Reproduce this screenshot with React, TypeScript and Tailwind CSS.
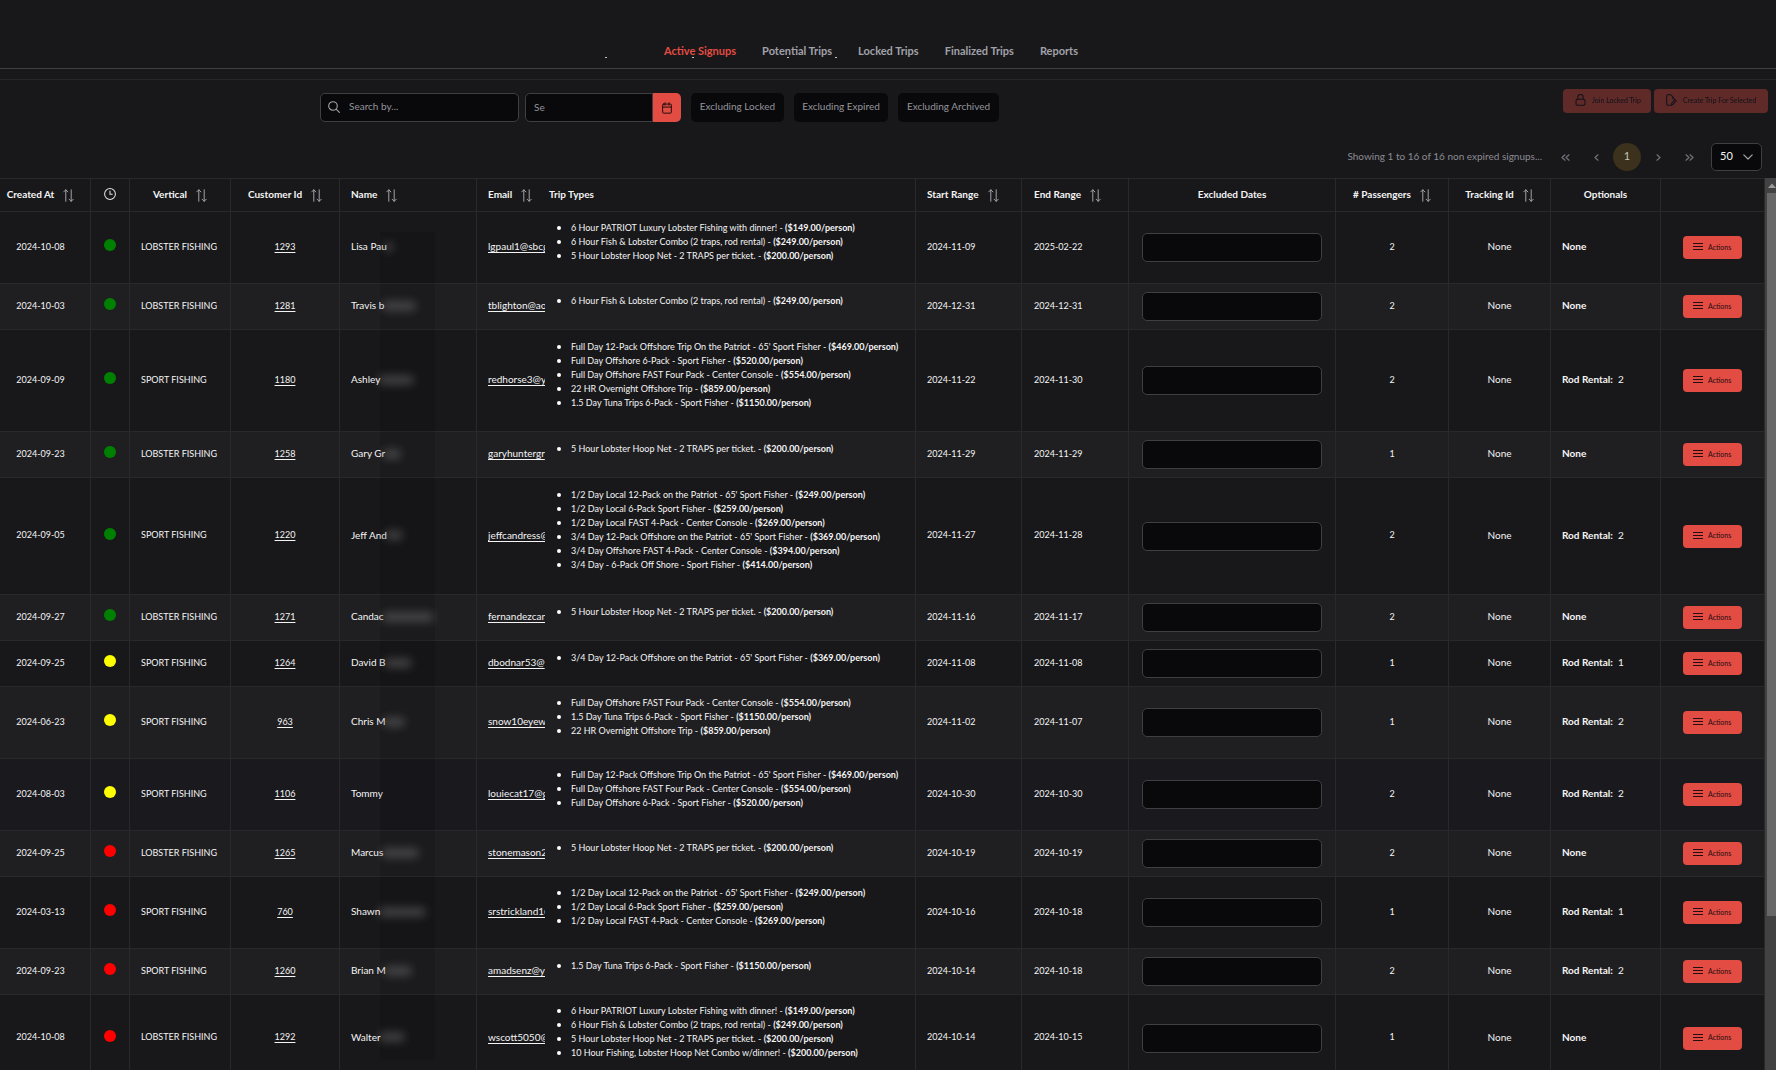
import type { ReactNode } from "react";

type Trip = [name: string, price: string];

type Signup = {
  created: string;
  status: "green" | "yellow" | "red";
  vertical: string;
  id: string;
  name: string;
  redacted: number;
  email: string;
  trips: Trip[];
  start: string;
  end: string;
  passengers: number;
  rods?: number;
  active?: boolean;
};

const LOBSTER = "LOBSTER FISHING";
const SPORT = "SPORT FISHING";

const luxury: Trip = ["6 Hour PATRIOT Luxury Lobster Fishing with dinner!", "149.00"];
const combo: Trip = ["6 Hour Fish & Lobster Combo (2 traps, rod rental)", "249.00"];
const hoopNet: Trip = ["5 Hour Lobster Hoop Net - 2 TRAPS per ticket.", "200.00"];
const tenHour: Trip = ["10 Hour Fishing, Lobster Hoop Net Combo w/dinner!", "200.00"];
const full12: Trip = ["Full Day 12-Pack Offshore Trip On the Patriot - 65' Sport Fisher", "469.00"];
const full6: Trip = ["Full Day Offshore 6-Pack - Sport Fisher", "520.00"];
const fullFast: Trip = ["Full Day Offshore FAST Four Pack - Center Console", "554.00"];
const overnight: Trip = ["22 HR Overnight Offshore Trip", "859.00"];
const tuna: Trip = ["1.5 Day Tuna Trips 6-Pack - Sport Fisher", "1150.00"];
const half12: Trip = ["1/2 Day Local 12-Pack on the Patriot - 65' Sport Fisher", "249.00"];
const half6: Trip = ["1/2 Day Local 6-Pack Sport Fisher", "259.00"];
const halfFast: Trip = ["1/2 Day Local FAST 4-Pack - Center Console", "269.00"];
const three12: Trip = ["3/4 Day 12-Pack Offshore on the Patriot - 65' Sport Fisher", "369.00"];
const threeFast: Trip = ["3/4 Day Offshore FAST 4-Pack - Center Console", "394.00"];
const three6: Trip = ["3/4 Day - 6-Pack Off Shore - Sport Fisher", "414.00"];

const signups: Signup[] = [
  { created: "2024-10-08", status: "green", vertical: LOBSTER, id: "1293", name: "Lisa Pau", redacted: 8, email: "lgpaul1@sbcg", trips: [luxury, combo, hoopNet], start: "2024-11-09", end: "2025-02-22", passengers: 2 },
  { created: "2024-10-03", status: "green", vertical: LOBSTER, id: "1281", name: "Travis b", redacted: 34, email: "tblighton@aol", trips: [combo], start: "2024-12-31", end: "2024-12-31", passengers: 2 },
  { created: "2024-09-09", status: "green", vertical: SPORT, id: "1180", name: "Ashley", redacted: 36, email: "redhorse3@ya", trips: [full12, full6, fullFast, overnight, tuna], start: "2024-11-22", end: "2024-11-30", passengers: 2, rods: 2 },
  { created: "2024-09-23", status: "green", vertical: LOBSTER, id: "1258", name: "Gary Gr", redacted: 18, email: "garyhuntergr", trips: [hoopNet], start: "2024-11-29", end: "2024-11-29", passengers: 1 },
  { created: "2024-09-05", status: "green", vertical: SPORT, id: "1220", name: "Jeff And", redacted: 18, email: "jeffcandress@", trips: [half12, half6, halfFast, three12, threeFast, three6], start: "2024-11-27", end: "2024-11-28", passengers: 2, rods: 2 },
  { created: "2024-09-27", status: "green", vertical: LOBSTER, id: "1271", name: "Candac", redacted: 52, email: "fernandezcan", trips: [hoopNet], start: "2024-11-16", end: "2024-11-17", passengers: 2 },
  { created: "2024-09-25", status: "yellow", vertical: SPORT, id: "1264", name: "David B", redacted: 28, email: "dbodnar53@", trips: [three12], start: "2024-11-08", end: "2024-11-08", passengers: 1, rods: 1 },
  { created: "2024-06-23", status: "yellow", vertical: SPORT, id: "963", name: "Chris M", redacted: 22, email: "snow10eyew@", trips: [fullFast, tuna, overnight], start: "2024-11-02", end: "2024-11-07", passengers: 1, rods: 2 },
  { created: "2024-08-03", status: "yellow", vertical: SPORT, id: "1106", name: "Tommy", redacted: 0, email: "louiecat17@g", trips: [full12, fullFast, full6], start: "2024-10-30", end: "2024-10-30", passengers: 2, rods: 2, active: true },
  { created: "2024-09-25", status: "red", vertical: LOBSTER, id: "1265", name: "Marcus", redacted: 38, email: "stonemason2", trips: [hoopNet], start: "2024-10-19", end: "2024-10-19", passengers: 2 },
  { created: "2024-03-13", status: "red", vertical: SPORT, id: "760", name: "Shawn", redacted: 48, email: "srstrickland1@", trips: [half12, half6, halfFast], start: "2024-10-16", end: "2024-10-18", passengers: 1, rods: 1 },
  { created: "2024-09-23", status: "red", vertical: SPORT, id: "1260", name: "Brian M", redacted: 28, email: "amadsenz@y", trips: [tuna], start: "2024-10-14", end: "2024-10-18", passengers: 2, rods: 2 },
  { created: "2024-10-08", status: "red", vertical: LOBSTER, id: "1292", name: "Walter", redacted: 26, email: "wscott5050@", trips: [luxury, combo, hoopNet, tenHour], start: "2024-10-14", end: "2024-10-15", passengers: 1 },
];

const rowHeights: Record<number, string> = {
  1: "h-[46px]",
  3: "h-[72px]",
  4: "h-[87px]",
  5: "h-[102px]",
  6: "h-[117px]",
};

const statusColors = {
  green: "bg-[#008000]",
  yellow: "bg-[#ffff00]",
  red: "bg-[#ff0000]",
};

const tabs = ["Active Signups", "Potential Trips", "Locked Trips", "Finalized Trips", "Reports"];

function SortIcon() {
  return (
    <svg viewBox="0 0 11 13" className="h-[13px] w-[11px] shrink-0 text-[#a1a1aa]" fill="none" stroke="currentColor" strokeWidth="1" strokeLinecap="round" strokeLinejoin="round">
      <path d="M2.8 12.3V.8M.7 2.9 2.8.8l2.1 2.1" />
      <path d="M8.2.8v11.5M6.1 10.2l2.1 2.1 2.1-2.1" />
    </svg>
  );
}

function ClockIcon() {
  return (
    <svg viewBox="0 0 14 14" className="inline h-[12px] w-[12px]" fill="none" stroke="#e4e4e7" strokeWidth="1.2" strokeLinecap="round">
      <circle cx="7" cy="7" r="6.3" />
      <path d="M7 3.6V7.2H9.6" />
    </svg>
  );
}

function SearchIcon() {
  return (
    <svg viewBox="0 0 14 14" className="h-[12px] w-[12px] shrink-0" fill="none" stroke="#a1a1aa" strokeWidth="1.3" strokeLinecap="round">
      <circle cx="5.8" cy="5.8" r="5" />
      <path d="M9.5 9.5 13.3 13.3" />
    </svg>
  );
}

function CalendarIcon() {
  return (
    <svg viewBox="0 0 12 14" className="h-[12px] w-[10px]" fill="none" stroke="#240d10" strokeWidth="1.2" strokeLinecap="round" strokeLinejoin="round">
      <rect x=".8" y="2.3" width="10.4" height="10.9" rx="1" />
      <path d="M.8 5.9h10.4M3.6.7v3M8.4.7v3" />
    </svg>
  );
}

function LockIcon() {
  return (
    <svg viewBox="0 0 12 14" className="h-[12px] w-[11px]" fill="none" stroke="currentColor" strokeWidth="1.2" strokeLinejoin="round">
      <rect x=".8" y="6.2" width="10.4" height="7" rx="1.4" />
      <path d="M2.9 6.2V3.8a3.1 3.1 0 0 1 6.2 0v2.4" />
    </svg>
  );
}

function FileEditIcon() {
  return (
    <svg viewBox="0 0 13 14" className="h-[12px] w-[11px]" fill="none" stroke="currentColor" strokeWidth="1.2" strokeLinejoin="round" strokeLinecap="round">
      <path d="M5 13.2H2.2A1.4 1.4 0 0 1 .8 11.8V2.2A1.4 1.4 0 0 1 2.2.8h3.4l2.6 2.6v2.2" />
      <path d="M8.2 4.2 12.2 8.2 8.4 12l-2.2 1.2.6-2.6 3.6-3.8" />
    </svg>
  );
}

function BarsIcon() {
  return (
    <svg viewBox="0 0 10 7" className="mb-px h-[7px] w-[10px]" fill="none" stroke="#240d10" strokeWidth="1">
      <path d="M0 .5h10M0 3.5h10M0 6.5h10" />
    </svg>
  );
}

function PagerButton({ label, d, w }: { label: string; d: string; w: string }) {
  return (
    <button type="button" aria-label={label} className="flex h-7 w-7 items-center justify-center rounded-full">
      <svg viewBox={`0 0 ${w} 7`} width={w} height="7" fill="none" stroke="#71717a" strokeWidth="1.2" strokeLinecap="round" strokeLinejoin="round">
        <path d={d} />
      </svg>
    </button>
  );
}

function Head({ children, sort, className = "justify-center" }: { children?: ReactNode; sort?: boolean; className?: string }) {
  return (
    <div className={`flex items-center gap-[9px] whitespace-nowrap ${className}`}>
      <span className="pb-[2px]">{children}</span>
      {sort && <SortIcon />}
    </div>
  );
}

const th = "h-[34px] border-y border-r border-[#29292c] p-0 text-[10px] font-bold";
const tdBase = "border-b border-r border-[#29292c]";
const td = `${tdBase} pb-[2px]`;

function Row({ row, striped }: { row: Signup; striped: boolean }) {
  const bg = row.active ? "bg-[#19191e]" : striped ? "bg-[#1f1f21]" : "bg-[#18181a]";
  return (
    <tr className={`${bg} ${rowHeights[row.trips.length]}`}>
      <td className={`${td} pr-[9px] text-center`}>{row.created}</td>
      <td className={`${tdBase} pb-[6px] text-center`}>
        <span className={`inline-block h-[12px] w-[12px] rounded-full align-middle ${statusColors[row.status]}`} />
      </td>
      <td className={`${td} pl-[11px]`}>{row.vertical}</td>
      <td className={`${td} text-center`}>
        <a href={`#customer-${row.id}`} className="underline underline-offset-2">{row.id}</a>
      </td>
      <td className={`${td} pl-[11px] text-[10px]`}>
        <div className="flex items-center">
          {row.name}
          <span className="-ml-[2px] h-[10px] rounded-full bg-white/20 blur-[4px]" style={{ width: row.redacted }} />
        </div>
      </td>
      <td className="overflow-hidden border-b border-[#29292c] pb-[2px] pl-[11px] text-[10px]">
        <a href="#email" className="block overflow-hidden whitespace-nowrap underline underline-offset-2">{row.email}</a>
      </td>
      <td className={`${tdBase} pb-[12px] pl-[12px]`}>
        <ul>
          {row.trips.map(([name, price]) => (
            <li key={name} className="flex items-center gap-[10px] whitespace-nowrap leading-[14px]">
              <span className="h-1 w-1 rounded-full bg-white" />
              <span>
                {name} - <b>(${price}/person)</b>
              </span>
            </li>
          ))}
        </ul>
      </td>
      <td className={`${td} pl-[11px]`}>{row.start}</td>
      <td className={`${td} pl-[12px]`}>{row.end}</td>
      <td className={`${tdBase} px-[13px]`}>
        <input aria-label={`Excluded dates for ${row.id}`} className="block h-[29px] w-full rounded-[5px] border border-[#3f3f43] bg-[#09090b] px-2" />
      </td>
      <td className={`${td} text-center`}>{row.passengers}</td>
      <td className={`${td} text-center text-[10px]`}>None</td>
      <td className={`${td} pl-[11px] text-[10px]`}>
        {row.rods ? (
          <>
            <b>Rod Rental:</b>&nbsp; {row.rods}
          </>
        ) : (
          <b>None</b>
        )}
      </td>
      <td className={tdBase}>
        <button type="button" className="mx-auto flex h-[23px] w-[59px] items-center gap-[5px] rounded bg-[#e24c43] pb-px pl-[10px] text-[7px] text-[#240d10]">
          <BarsIcon />
          Actions
        </button>
      </td>
    </tr>
  );
}

export default function App() {
  return (
    <main className="flex h-screen flex-col overflow-hidden bg-[#18181a] font-['Lato',sans-serif] text-[#f4f4f5]">
      <nav className="relative flex h-[69px] shrink-0 justify-center gap-[26px] border-b border-[#3f3f43] pr-[34px] pt-[43px] text-[11px] leading-4 font-bold text-[#a1a1aa]">
        {tabs.map((tab, i) => (
          <a key={tab} href="#tab" className={i === 0 ? "text-[#e24c43]" : undefined}>
            {tab}
          </a>
        ))}
        {/* ticks left under the tab strip */}
        <span className="absolute left-[605px] top-[57px] h-px w-[2px] bg-[#c4c4c8]" />
        <span className="absolute left-[692px] top-[57px] h-px w-[2px] bg-[#c4c4c8]" />
        <span className="absolute left-[787px] top-[57px] h-px w-[2px] bg-[#c4c4c8]" />
        <span className="absolute left-[835px] top-[57px] h-px w-[2px] bg-[#c4c4c8]" />
      </nav>

      <section className="mt-[10px] flex shrink-0 items-start border-t border-[#27272a] pl-80 pr-2 text-[10px]">
        <div className="flex pt-[13px]">
          <label className="flex h-[29px] w-[199px] items-center gap-[9px] rounded-[5px] border border-[#3f3f43] bg-[#09090b] pb-[2px] pl-[7px]">
            <SearchIcon />
            <input type="text" aria-label="Search" placeholder="Search by..." className="w-full bg-transparent outline-none placeholder:text-[#94949c]" />
          </label>
          <div className="ml-[6px] flex">
            <input type="text" aria-label="Date range" placeholder="Se" className="h-[29px] w-[128px] rounded-l-[5px] border border-[#3f3f43] bg-[#09090b] pb-[2px] pl-2 outline-none placeholder:text-[#94949c]" />
            <button type="button" aria-label="Choose date" className="flex h-[29px] w-[28px] items-center justify-center rounded-r-[5px] bg-[#e24c43]">
              <CalendarIcon />
            </button>
          </div>
          <div className="ml-[10px] flex gap-[10px] text-[#94949c]">
            <button type="button" className="h-[29px] w-[93px] rounded-[5px] bg-[#09090b] pb-[2px]">Excluding Locked</button>
            <button type="button" className="h-[29px] w-[94px] rounded-[5px] bg-[#09090b] pb-[2px]">Excluding Expired</button>
            <button type="button" className="h-[29px] w-[101px] rounded-[5px] bg-[#09090b] pb-[2px]">Excluding Archived</button>
          </div>
        </div>
        <div className="ml-auto flex gap-[3px] pt-[9px] text-[7px] text-[#020617]">
          <button type="button" disabled className="flex h-6 w-[88px] items-center gap-[6px] rounded bg-[#e24c43] pb-[2px] pl-3 opacity-35">
            <LockIcon />
            Join Locked Trip
          </button>
          <button type="button" disabled className="flex h-6 w-[114px] items-center gap-[6px] rounded bg-[#e24c43] pb-[2px] pl-3 opacity-35">
            <FileEditIcon />
            Create Trip For Selected
          </button>
        </div>
      </section>

      <section className="mt-[21px] mb-[7px] flex shrink-0 items-center justify-end gap-[3px] pr-[14px]">
        <p className="mr-[6px] pb-[2px] text-[10px] text-[#8b8b93]">Showing 1 to 16 of 16 non expired signups...</p>
        <PagerButton label="First page" w="9" d="M4 .8 1 3.5l3 2.7M8 .8 5 3.5l3 2.7" />
        <PagerButton label="Previous page" w="5" d="M4 .8 1 3.5l3 2.7" />
        <button type="button" aria-current="page" className="h-7 w-7 rounded-full bg-[#3b311c] pb-[2px] text-[11px] text-[#c9c3b4]">1</button>
        <PagerButton label="Next page" w="5" d="m1 .8 3 2.7-3 2.7" />
        <PagerButton label="Last page" w="9" d="m1 .8 3 2.7-3 2.7M5 .8l3 2.7-3 2.7" />
        <div className="relative ml-[5px]">
          <select aria-label="Rows per page" defaultValue="50" className="block h-7 w-[51px] appearance-none rounded-[5px] border border-[#3f3f43] bg-[#09090b] pb-[2px] pl-2 text-[11px] outline-none">
            <option>25</option>
            <option>50</option>
            <option>100</option>
          </select>
          <svg viewBox="0 0 10 6" className="pointer-events-none absolute right-[9px] top-[11px] h-[6px] w-[10px]" fill="none" stroke="#a1a1aa" strokeWidth="1.2" strokeLinecap="round" strokeLinejoin="round">
            <path d="m.8.8 4.2 4.2L9.2.8" />
          </svg>
        </div>
      </section>

      <section className="flex min-h-0 flex-1">
        <div className="relative min-w-0 flex-1 overflow-hidden">
          <table className="w-full table-fixed border-separate border-spacing-0 text-[9px]">
            <colgroup>
              <col className="w-[91px]" />
              <col className="w-[39px]" />
              <col className="w-[101px]" />
              <col className="w-[109px]" />
              <col className="w-[137px]" />
              <col className="w-[68px]" />
              <col className="w-[371px]" />
              <col className="w-[106px]" />
              <col className="w-[107px]" />
              <col className="w-[207px]" />
              <col className="w-[113px]" />
              <col className="w-[102px]" />
              <col className="w-[110px]" />
              <col className="w-[104px]" />
            </colgroup>
            <thead>
              <tr>
                <th className={`${th} pr-[9px]`}><Head sort>Created At</Head></th>
                <th className={`${th} pb-1`} aria-label="Status"><ClockIcon /></th>
                <th className={th}><Head sort>Vertical</Head></th>
                <th className={th}><Head sort>Customer Id</Head></th>
                <th className={`${th} pl-[11px]`}><Head sort className="justify-start">Name</Head></th>
                <th className="border-y border-[#29292c] p-0 pl-[11px] text-[10px] font-bold"><Head sort className="justify-start">Email</Head></th>
                <th className={`${th} pl-1`}><Head className="justify-start">Trip Types</Head></th>
                <th className={`${th} pl-[11px]`}><Head sort className="justify-start">Start Range</Head></th>
                <th className={`${th} pl-[12px]`}><Head sort className="justify-start">End Range</Head></th>
                <th className={th}><Head>Excluded Dates</Head></th>
                <th className={th}><Head sort># Passengers</Head></th>
                <th className={th}><Head sort>Tracking Id</Head></th>
                <th className={th}><Head>Optionals</Head></th>
                <th className={th} aria-label="Actions" />
              </tr>
            </thead>
            <tbody>
              {signups.map((row, i) => (
                <Row key={row.id} row={row} striped={i % 2 === 1} />
              ))}
            </tbody>
          </table>
          {/* privacy strip over the surnames */}
          <div className="pointer-events-none absolute bottom-[10px] left-[380px] top-[54px] w-[55px] bg-black/10" />
        </div>
        <div className="flex w-[11px] shrink-0 flex-col bg-[#424242] pl-[2px]">
          <svg viewBox="0 0 9 15" className="h-[15px] w-[9px] shrink-0" fill="#9a9a9a">
            <path d="M1 10h8L5 5.5z" />
          </svg>
          <div className="h-[81%] bg-[#686868]" />
        </div>
      </section>
    </main>
  );
}
